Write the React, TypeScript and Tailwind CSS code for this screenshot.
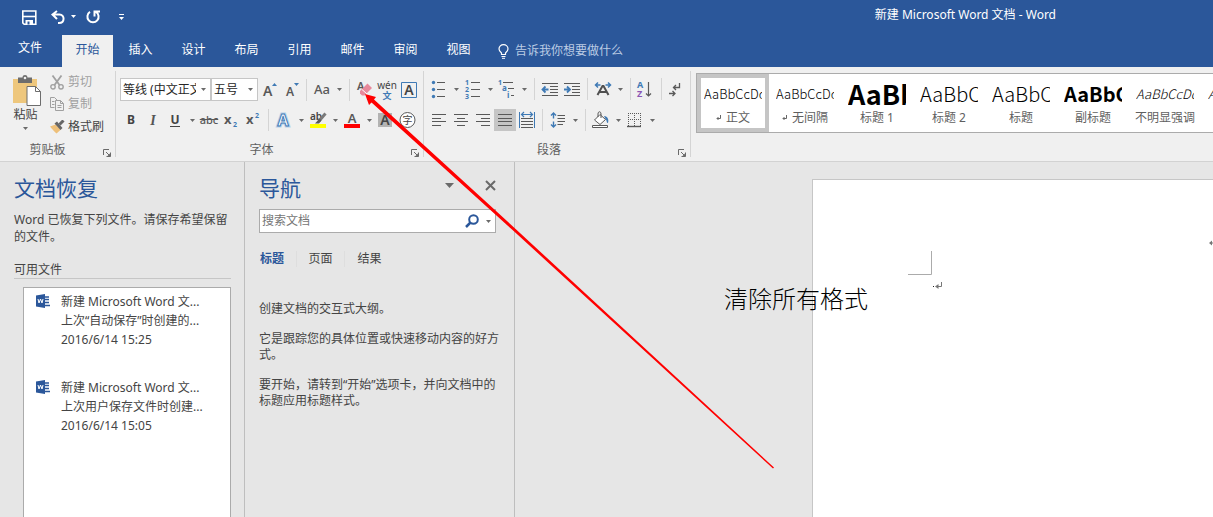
import type { ReactNode } from "react";

const INK = "#595959";
const BLUE = "#3f7ab5";

function Caret({ className = "" }: { className?: string }) {
  return (
    <svg width="5" height="3" viewBox="0 0 5 3" className={className} aria-hidden="true">
      <path d="M0 0h5L2.5 3z" fill="currentColor" />
    </svg>
  );
}

function Icon({ children }: { children: ReactNode }) {
  return (
    <svg width="22" height="22" viewBox="0 0 22 22" fill="none" className="shrink-0" aria-hidden="true">
      {children}
    </svg>
  );
}

function Tool({
  label,
  menu = false,
  pressed = false,
  children,
}: {
  label: string;
  menu?: boolean;
  pressed?: boolean;
  children: ReactNode;
}) {
  return (
    <button
      type="button"
      aria-label={label}
      aria-pressed={pressed || undefined}
      className={`flex h-[22px] shrink-0 items-center text-[#6a6a6a] ${pressed ? "bg-[#c5c5c5]" : ""}`}
    >
      <span className="flex w-[22px] justify-center">{children}</span>
      {menu && (
        <span className="flex w-3 justify-center">
          <Caret />
        </span>
      )}
    </button>
  );
}

function Sep() {
  return <span className="mx-1 h-[22px] w-px shrink-0 bg-[#d4d4d4]" />;
}

function Launcher({ label }: { label: string }) {
  return (
    <button type="button" aria-label={label} className="absolute right-1 bottom-0 text-[#6a6a6a]">
      <svg width="8" height="8" viewBox="0 0 8 8" fill="none" stroke="currentColor">
        <path d="M0.5 6V0.5H6" />
        <path d="M3 3l3.5 3.5M7.5 3.5v4h-4" />
        <path d="M7.5 4v3.5H4z" fill="currentColor" stroke="none" />
      </svg>
    </button>
  );
}

function Group({ title, className, children }: { title: string; className: string; children: ReactNode }) {
  return (
    <section aria-label={title} className={`relative flex shrink-0 flex-col ${className}`}>
      {children}
      <div className="mt-auto pr-5 text-center text-xs leading-[14px] text-[#5f5f5f]">{title}</div>
      <Launcher label={`${title}设置`} />
    </section>
  );
}

function Lines({ rows }: { rows: [number, number, number][] }) {
  return (
    <Icon>
      {rows.map(([x, y, w]) => (
        <path key={y} d={`M${x} ${y}.5h${w}`} stroke={INK} />
      ))}
    </Icon>
  );
}

const TABS = ["开始", "插入", "设计", "布局", "引用", "邮件", "审阅", "视图"];

function TitleBar() {
  return (
    <div className="flex h-[35px] items-center pl-5 text-white">
      <button type="button" aria-label="保存" className="mt-[-2px] w-[18px]">
        <svg width="18" height="18" viewBox="0 0 18 18" fill="none">
          <path d="M2.8 3h13v13.2H4.2L2.8 14.8z" stroke="#fff" strokeWidth="1.6" />
          <path d="M3 8.5h12.5" stroke="#fff" strokeWidth="1.6" />
          <path d="M5.5 12h7.5v4.5H5.5z" fill="#fff" />
          <path d="M7.5 13.5h2v3h-2z" fill="#2b579a" />
        </svg>
      </button>
      <button type="button" aria-label="撤消" className="ml-[12px] mt-[-2px] flex w-[27px] items-center">
        <svg width="16" height="16" viewBox="0 0 16 16" fill="none" stroke="#fff" strokeWidth="2">
          <path d="M7 2L2.5 5.5 7 10M3 5.5h6.5c5.5 0 5.5 8.5-.5 8.5H8" />
        </svg>
        <Caret className="ml-[5px]" />
      </button>
      <button type="button" aria-label="重复" className="ml-[8px] mt-[-2px]">
        <svg width="16" height="16" viewBox="0 0 16 16" fill="none" stroke="#fff" strokeWidth="2">
          <path d="M5 2.900A5.600 5.600 0 1 0 11 2.900M9.500 7.500V2.500H15" />
        </svg>
      </button>
      <button type="button" aria-label="自定义快速访问工具栏" className="ml-[18px] mt-[-2px] flex flex-col items-center gap-[2px]">
        <span className="h-px w-[5px] bg-white" />
        <Caret />
      </button>
      <h1 className="mt-[-5px] mr-[157px] ml-auto text-xs whitespace-nowrap">新建 Microsoft Word 文档 - Word</h1>
    </div>
  );
}

function TabBar() {
  return (
    <nav className="flex h-8 items-stretch gap-[2px] text-xs text-white">
      <button type="button" className="w-[60px] pb-[6px]">
        文件
      </button>
      {TABS.map((t, i) => (
        <button
          key={t}
          type="button"
          className={`w-[51px] shrink-0 pb-[2px] ${i === 0 ? "bg-[#f0f0f0] text-[#2b579a]" : ""}`}
        >
          {t}
        </button>
      ))}
      <button type="button" className="ml-[12px] flex items-center gap-[6px] whitespace-nowrap text-[#bccce4]">
        <svg width="11" height="15" viewBox="0 0 11 15" fill="none" stroke="#fff">
          <path d="M3.5 10.5V9C2 7.500 1 6.600 1 4.900a4.500 4.200 0 0 1 9 0C10 6.600 9 7.500 7.500 9v1.500z" strokeWidth="1.200" />
          <path d="M3.500 12.500h4M4 14.300h3" />
        </svg>
        告诉我你想要做什么
      </button>
    </nav>
  );
}

function Clipboard() {
  return (
    <Group title="剪贴板" className="w-[115px]">
      <div className="flex pl-[7px]">
        <button type="button" className="flex w-[43px] shrink-0 flex-col items-center pt-1 pr-[6px] text-xs text-[#444]">
          <svg width="28" height="32" viewBox="0 0 28 32" fill="none" className="ml-[3px]">
            <path d="M0 4h24v24H0z" fill="#eec77d" />
            <path d="M5 2.500h4.500C9.500-.8 14.500-.8 14.500 2.500H19V8H5z" fill="#6d6d6d" />
            <circle cx="12" cy="3" r="1.300" fill="#f0f0f0" />
            <path d="M14 11.500h8.500L27.500 16.500V30.500H14z" fill="#fff" stroke="#6d6d6d" />
            <path d="M22.500 11.500v5h5" stroke="#6d6d6d" />
          </svg>
          <span className="leading-4">粘贴</span>
          <Caret className="mt-1 text-[#6a6a6a]" />
        </button>
        <div className="flex flex-col text-xs text-[#444]">
          <button type="button" disabled className="flex h-[22px] items-center gap-[4px] text-[#a0a0a0]">
            <svg width="14" height="15" viewBox="0 0 14 15" fill="none" stroke="currentColor">
              <path d="M2.500 0.500L9.500 10M11.500 0.500L4.500 10" strokeWidth="1.800" />
              <circle cx="3" cy="11.800" r="2.200" strokeWidth="1.400" />
              <circle cx="11" cy="11.800" r="2.200" strokeWidth="1.400" />
            </svg>
            剪切
          </button>
          <button type="button" disabled className="flex h-[22px] items-center gap-[4px] text-[#a0a0a0]">
            <svg width="14" height="14" viewBox="0 0 14 14" fill="none" stroke="currentColor">
              <path d="M4.500 10.500h-4v-10h4l3 3M2 4.500h2.500M2 7.500h2.500" />
              <path d="M5.500 3.500h5l3 3v7h-8zM10.500 3.500v3h3M7.500 8.500h4M7.500 10.500h4" />
            </svg>
            复制
          </button>
          <button type="button" className="flex h-6 items-center gap-[3px] whitespace-nowrap">
            <svg width="15" height="14" viewBox="0 0 15 14" fill="none">
              <path d="M0 6.500L5.500 4.500 11 9.500 6.500 13.500C5 12 2 9 0 6.500z" fill="#eec07a" />
              <path d="M4.500 3.500L7 1.500 12.500 8 10.500 10z" fill="#666" />
              <path d="M9.500 4.500L13.500.5" stroke="#666" strokeWidth="3" />
            </svg>
            格式刷
          </button>
        </div>
      </div>
    </Group>
  );
}

function RibbonSelect({ label, value, className }: { label: string; value: string; className: string }) {
  return (
    <label className={`relative block h-[23px] ${className}`}>
      <select
        aria-label={label}
        className="block h-full w-full appearance-none border border-[#c6c6c6] bg-white pr-[14px] pl-[2px] text-xs text-[#262626] outline-none"
      >
        <option>{value}</option>
      </select>
      <Caret className="pointer-events-none absolute top-[10px] right-[5px] text-[#6a6a6a]" />
    </label>
  );
}

function FontGroup() {
  return (
    <Group title="字体" className="w-[308px] border-l border-[#d4d4d4] pl-1">
      <div className="flex items-center pt-[7px]">
        <RibbonSelect label="字体" value="等线 (中文正文)" className="w-[91px]" />
        <RibbonSelect label="字号" value="五号" className="w-[47px]" />
        <Tool label="增大字号">
          <Icon>
            <text x="5" y="17" fontSize="14" fontWeight="600" fill={INK}>A</text>
            <path d="M14 7h5L16.500 4z" fill={BLUE} />
          </Icon>
        </Tool>
        <Tool label="减小字号">
          <Icon>
            <text x="6" y="17" fontSize="12" fontWeight="600" fill={INK}>A</text>
            <path d="M14 4h5L16.500 7z" fill={BLUE} />
          </Icon>
        </Tool>
        <Sep />
        <Tool label="更改大小写" menu>
          <span className="text-[13px] font-medium text-[#595959]">Aa</span>
        </Tool>
        <Sep />
        <Tool label="清除所有格式">
          <Icon>
            <text x="3" y="11" fontSize="11" fontWeight="600" fill={INK}>A</text>
            <path d="M6 12L13.500 4.500 18 9 10.500 16.500H8L6 14.500z" fill="#e8899b" />
            <path d="M8 10.500l5 4.500" stroke="#fff" />
          </Icon>
        </Tool>
        <Tool label="拼音指南">
          <span className="flex flex-col items-center text-[10px] leading-[11px] text-[#444]">
            wén<span className="text-[9px] leading-[9px] font-bold text-[#3f7ab5]">文</span>
          </span>
        </Tool>
        <Tool label="字符边框">
          <Icon>
            <path d="M3.500 3.500h15v15h-15z" stroke={BLUE} />
            <text x="11" y="16" fontSize="14" fontWeight="600" textAnchor="middle" fill="#444">A</text>
          </Icon>
        </Tool>
      </div>
      <div className="flex items-center pt-[8px]">
        <Tool label="加粗"><span className="text-xs font-bold text-[#444]">B</span></Tool>
        <Tool label="倾斜"><span className="font-['Liberation_Serif',serif] text-[14px] font-bold text-[#555] italic">I</span></Tool>
        <Tool label="下划线" menu><span className="border-b border-[#444] text-xs leading-[13px] font-bold text-[#444]">U</span></Tool>
        <Tool label="删除线"><span className="text-[11px] font-medium text-[#595959] line-through">abc</span></Tool>
        <Tool label="下标">
          <Icon>
            <text x="4" y="15" fontSize="13" fontWeight="700" fill={INK}>x</text>
            <text x="13" y="18" fontSize="7" fontWeight="700" fill={BLUE}>2</text>
          </Icon>
        </Tool>
        <Tool label="上标">
          <Icon>
            <text x="4" y="15" fontSize="13" fontWeight="700" fill={INK}>x</text>
            <text x="13" y="9" fontSize="7" fontWeight="700" fill={BLUE}>2</text>
          </Icon>
        </Tool>
        <Sep />
        <Tool label="文本效果" menu>
          <Icon>
            <text x="10" y="17" fontSize="16" fontWeight="700" textAnchor="middle" fill="#fff" stroke="#b9d2ea" strokeWidth="3">A</text>
            <text x="10" y="17" fontSize="16" fontWeight="700" textAnchor="middle" fill="#fff" stroke={BLUE}>A</text>
          </Icon>
        </Tool>
        <Tool label="突出显示" menu>
          <Icon>
            <text x="3" y="11" fontSize="10" fontWeight="600" fill="#444">ab</text>
            <path d="M18.500 4.500L12 12" stroke="#7a7a7a" strokeWidth="3" />
            <path d="M12.500 9.500L8 14.500h4l2.500-3z" fill="#5a5a5a" />
            <path d="M3 15h16v4H3z" fill="#ffff00" />
          </Icon>
        </Tool>
        <Tool label="字体颜色" menu>
          <Icon>
            <text x="11" y="14" fontSize="13" fontWeight="600" textAnchor="middle" fill={INK}>A</text>
            <path d="M3 15h16v4H3z" fill="#ff0000" />
          </Icon>
        </Tool>
        <Tool label="字符底纹">
          <Icon>
            <path d="M3 4h14v14H3z" fill="#b3b3b3" />
            <text x="10" y="16" fontSize="14" fontWeight="600" textAnchor="middle" fill="#444">A</text>
          </Icon>
        </Tool>
        <Tool label="带圈字符">
          <Icon>
            <circle cx="10.500" cy="11" r="7.500" fill="#fff" stroke={INK} />
            <text x="10.500" y="15" fontSize="10" textAnchor="middle" fill="#444">字</text>
          </Icon>
        </Tool>
      </div>
    </Group>
  );
}

function ParagraphGroup() {
  return (
    <Group title="段落" className="w-[268px] border-x border-[#d4d4d4] pl-1">
      <div className="flex items-center pt-[7px]">
        <Tool label="项目符号" menu>
          <Icon>
            {[4, 11, 18].map((y) => (
              <g key={y}>
                <circle cx="5.500" cy={y + 0.5} r="1.700" fill={BLUE} />
                <path d={`M9 ${y}.5h8`} stroke={INK} />
              </g>
            ))}
          </Icon>
        </Tool>
        <Tool label="编号" menu>
          <Icon>
            {[4, 11, 18].map((y, i) => (
              <g key={y}>
                <text x="3" y={y + 3} fontSize="7" fontWeight="700" fill={BLUE}>{i + 1}</text>
                <path d={`M9 ${y}.5h9`} stroke={INK} />
              </g>
            ))}
          </Icon>
        </Tool>
        <Tool label="多级列表" menu>
          <Icon>
            <text x="2" y="7" fontSize="7" fontWeight="700" fill={BLUE}>1</text>
            <text x="6" y="13" fontSize="8" fontWeight="700" fill={BLUE}>a</text>
            <text x="11" y="20" fontSize="8" fontWeight="700" fill={BLUE}>i</text>
            <path d="M7 4.500h10M12 10.500h6M15 17.500h3" stroke={INK} />
          </Icon>
        </Tool>
        <Sep />
        <Tool label="减少缩进量">
          <Icon>
            <path d="M3 5.500h16M11 8.500h8M11 11.500h8M11 14.500h8M3 17.500h16" stroke={INK} />
            <path d="M9.500 11.500H4M6.500 8.500l-3 3 3 3" stroke={BLUE} strokeWidth="1.800" />
          </Icon>
        </Tool>
        <Tool label="增加缩进量">
          <Icon>
            <path d="M3 5.500h16M11 8.500h8M11 11.500h8M11 14.500h8M3 17.500h16" stroke={INK} />
            <path d="M3 11.500h5.500M6 8.500l3 3-3 3" stroke={BLUE} strokeWidth="1.800" />
          </Icon>
        </Tool>
        <Sep />
        <Tool label="中文版式" menu>
          <Icon>
            <path d="M5.500 17L10.500 8h1L16.500 17M7.500 14h7" stroke="#505050" strokeWidth="2" />
            <path d="M8.500 7H4M6 4.500L3.500 7 6 9.500M13.500 7H18M16 4.500L18.500 7 16 9.500" stroke={BLUE} strokeWidth="1.500" />
          </Icon>
        </Tool>
        <Sep />
        <Tool label="排序">
          <Icon>
            <text x="2" y="10" fontSize="9" fontWeight="700" fill={BLUE}>A</text>
            <text x="2" y="19" fontSize="9" fontWeight="700" fill="#8a55b5">Z</text>
            <path d="M13.500 4v14M11 15.500l2.500 2.500 2.500-2.500" stroke={INK} strokeWidth="1.200" />
          </Icon>
        </Tool>
        <Sep />
        <Tool label="显示编辑标记">
          <Icon>
            <path d="M13.500 5v4.500H8M10 7L7.500 9.500 10 12" stroke={INK} strokeWidth="1.300" />
            <path d="M3 15.500h5.500M6.500 13l2.500 2.500L6.500 18" stroke={INK} strokeWidth="1.300" />
          </Icon>
        </Tool>
      </div>
      <div className="flex items-center pt-[9px]">
        <Tool label="左对齐"><Lines rows={[[4, 5, 14], [4, 9, 9], [4, 12, 14], [4, 16, 9]]} /></Tool>
        <Tool label="居中"><Lines rows={[[4, 5, 14], [7, 9, 8], [4, 12, 14], [7, 16, 8]]} /></Tool>
        <Tool label="右对齐"><Lines rows={[[4, 5, 14], [9, 9, 9], [4, 12, 14], [9, 16, 9]]} /></Tool>
        <Tool label="两端对齐" pressed><Lines rows={[[4, 5, 14], [4, 9, 14], [4, 12, 14], [4, 16, 14]]} /></Tool>
        <Tool label="分散对齐">
          <Icon>
            <path d="M3.500 3v16M18.500 3v16" stroke={BLUE} />
            <path d="M5.500 5.500h11M8 3L5.500 5.500 8 8M14 3l2.500 2.500L14 8" stroke={BLUE} strokeWidth="1.200" />
            <path d="M5 9.500h12M5 12.500h12M5 15.500h12M5 18.500h12" stroke={INK} />
          </Icon>
        </Tool>
        <Sep />
        <Tool label="行距" menu>
          <Icon>
            <path d="M6.500 4.500v5M6.500 12.500v5M4 6.500L6.500 4 9 6.500M4 15.500L6.500 18 9 15.500" stroke={BLUE} strokeWidth="1.400" />
            <path d="M10.500 6.500H18M10.500 9.500H18M10.500 12.500H18M10.500 15.500H16" stroke={INK} />
          </Icon>
        </Tool>
        <Sep />
        <Tool label="底纹" menu>
          <Icon>
            <path d="M4.500 11L10 5.500 15.500 10.500 10 15.500z" fill="#fff" stroke={INK} />
            <path d="M8 8V5c0-3 3-3 3 0v4" stroke={INK} />
            <path d="M14 7c4 0 5 4 4 7-1.500 0-1-2.500-2.500-4z" fill={BLUE} />
            <path d="M2.500 16.500h15v2h-15z" fill="#fff" stroke={INK} />
          </Icon>
        </Tool>
        <Tool label="边框" menu>
          <Icon>
            <path d="M4 4.500h13M4 10.500h13M4.500 4v13M10.500 4v13M16.500 4v13" stroke={INK} strokeDasharray="1 1" />
            <path d="M3 17.500h14" stroke={INK} strokeWidth="1.400" />
          </Icon>
        </Tool>
      </div>
    </Group>
  );
}

const STYLES = [
  { name: "正文", mark: true, sample: "text-[13px] font-light" },
  { name: "无间隔", mark: true, sample: "text-[13px] font-light" },
  { name: "标题 1", mark: false, sample: "text-[27px] font-bold" },
  { name: "标题 2", mark: false, sample: "text-[20px] font-light" },
  { name: "标题", mark: false, sample: "text-[20px] font-light" },
  { name: "副标题", mark: false, sample: "text-[20px] font-bold" },
  { name: "不明显强调", mark: false, sample: "text-[13px] font-light italic" },
  { name: "强调", mark: false, sample: "text-[13px] font-light italic" },
];

function StyleGallery() {
  return (
    <div className="ml-[5px] mt-[6px] flex h-[60px] min-w-0 flex-1 overflow-hidden border-y border-l border-[#ababab] bg-white">
      {STYLES.map((s, i) => (
        <button
          key={s.name}
          type="button"
          className={`flex w-[72px] shrink-0 flex-col items-center border-4 ${i === 0 ? "border-[#c5c5c5]" : "border-transparent"}`}
        >
          <span className={`flex h-[32px] w-[58px] items-center overflow-hidden font-['Noto_Sans_CJK_SC',sans-serif] whitespace-nowrap text-black ${s.sample}`}>
            AaBbCcDd
          </span>
          <span className="flex items-center gap-[5px] text-xs leading-[16px] whitespace-nowrap text-[#5f5f5f]">
            {s.mark && (
              <svg width="5" height="6" viewBox="0 0 5 6" fill="none" stroke="#666" aria-hidden="true">
                <path d="M4.500 0v3.500H1M2.500 2L1 3.500 2.500 5" />
              </svg>
            )}
            {s.name}
          </span>
        </button>
      ))}
    </div>
  );
}

function WordIcon() {
  return (
    <svg width="15" height="14" viewBox="0 0 15 14" fill="none" className="mt-[2px] shrink-0" aria-hidden="true">
      <path d="M8 2h5.500v10H8z" fill="#fff" />
      <path d="M8 3h5M8 5.500h5M8 8.500h5M8 11.500h6" stroke="#2b579a" strokeWidth="1.500" />
      <path d="M0 1.500L9 0v14L0 12.500z" fill="#2b579a" />
      <path d="M2 5l1 4 1.500-4L6 9l1-4" stroke="#fff" />
    </svg>
  );
}

const FILES = [
  ["新建 Microsoft Word 文...", "上次“自动保存”时创建的...", "2016/6/14 15:25"],
  ["新建 Microsoft Word 文...", "上次用户保存文件时创建...", "2016/6/14 15:05"],
];

function RecoveryPane() {
  return (
    <aside className="flex w-[245px] shrink-0 flex-col border-r border-[#bebebe] pr-[13px] pl-[14px]">
      <h2 className="pt-[11px] text-[21px] leading-[30px] text-[#2b579a]">文档恢复</h2>
      <p className="pt-2 text-xs leading-[17px]">Word 已恢复下列文件。请保存希望保留的文件。</p>
      <h3 className="mt-4 border-b border-[#c6c6c6] text-xs leading-[17px]">可用文件</h3>
      <ul className="mt-2 ml-[9px] flex-1 border-x border-t border-[#ababab] bg-white pl-3 text-xs leading-[19px]">
        {FILES.map((f) => (
          <li key={f[2]} className="flex gap-[10px] pt-[4px] pb-[25px]">
            <WordIcon />
            <div className="whitespace-nowrap">
              {f.map((line) => (
                <div key={line}>{line}</div>
              ))}
            </div>
          </li>
        ))}
      </ul>
    </aside>
  );
}

function NavigationPane() {
  return (
    <aside className="flex w-[270px] shrink-0 flex-col border-r border-[#bebebe] pl-[14px] text-xs">
      <div className="flex items-center pt-[11px] pr-[18px]">
        <h2 className="text-[21px] leading-[30px] text-[#2b579a]">导航</h2>
        <button type="button" aria-label="窗格选项" className="mb-[6px] ml-auto text-[#6a6a6a]">
          <svg width="9" height="5" viewBox="0 0 9 5"><path d="M0 0h9L4.500 5z" fill="currentColor" /></svg>
        </button>
        <button type="button" aria-label="关闭" className="mb-[6px] ml-[31px] text-[#6a6a6a]">
          <svg width="11" height="11" viewBox="0 0 11 11" stroke="currentColor" strokeWidth="2"><path d="M1 1l9 9M10 1l-9 9" /></svg>
        </button>
      </div>
      <div className="mt-[6px] mr-[18px] flex h-[24px] items-center border border-[#ababab] bg-white">
        <input
          type="text"
          aria-label="搜索文档"
          placeholder="搜索文档"
          className="min-w-0 flex-1 pl-[2px] outline-none placeholder:text-[#767676]"
        />
        <button type="button" aria-label="搜索" className="text-[#2b579a]">
          <svg width="14" height="14" viewBox="0 0 14 14" fill="none" stroke="currentColor" strokeWidth="2">
            <circle cx="8.500" cy="5.500" r="4.300" />
            <path d="M5.500 8.500L1 13" strokeWidth="2.500" />
          </svg>
        </button>
        <button type="button" aria-label="搜索选项" className="mr-1 ml-[7px] text-[#6a6a6a]">
          <Caret />
        </button>
      </div>
      <div className="mt-4 flex h-5 items-center">
        <button type="button" className="w-[37px] pl-px text-left font-bold text-[#2b579a]">标题</button>
        <button type="button" className="w-[49px] border-x border-[#dedede]">页面</button>
        <button type="button" className="w-[49px]">结果</button>
      </div>
      <div className="mt-8 flex flex-col gap-[14px] pr-[14px] leading-[16px]">
        <p>创建文档的交互式大纲。</p>
        <p>它是跟踪您的具体位置或快速移动内容的好方式。</p>
        <p>要开始，请转到“开始”选项卡，并向文档中的标题应用标题样式。</p>
      </div>
    </aside>
  );
}

function DocumentArea() {
  return (
    <main className="relative flex min-w-0 flex-1 pt-[17px] pl-[297px]">
      <div className="relative flex-1 overflow-hidden border-t border-l border-[#c6c6c6] bg-white">
        <svg width="40" height="42" viewBox="0 0 40 42" fill="none" className="absolute top-[71px] left-[95px]" aria-hidden="true">
          <path d="M23.500 0v23.500H0" stroke="#ababab" />
          <path d="M33.500 31v4.500H28" stroke="#777" />
          <path d="M30.500 33v5L27 35.500z" fill="#777" />
          <path d="M25 35h1v1h-1z" fill="#222" />
        </svg>
        <svg width="4" height="6" viewBox="0 0 4 6" className="absolute top-[60px] right-0" aria-hidden="true">
          <path d="M0 3l3-2.500v5zM2 2.500h2v1H2z" fill="#777" />
        </svg>
      </div>
      <p className="absolute top-[118px] left-[209px] font-['Noto_Sans_CJK_SC',sans-serif] text-2xl leading-9 font-light whitespace-nowrap text-black">
        清除所有格式
      </p>
    </main>
  );
}

export default function App() {
  return (
    <div className="relative flex min-h-screen flex-col overflow-hidden bg-[#e6e6e6] font-['Noto_Sans','Noto_Sans_CJK_SC',sans-serif] text-[#444]">
      <header className="bg-[#2b579a]">
        <TitleBar />
        <TabBar />
      </header>
      <div className="flex h-[95px] border-b border-[#d2d2d2] bg-[#f0f0f0]">
        <div className="flex shrink-0 pt-1 pb-1">
          <Clipboard />
          <FontGroup />
          <ParagraphGroup />
        </div>
        <StyleGallery />
      </div>
      <div className="flex flex-1">
        <RecoveryPane />
        <NavigationPane />
        <DocumentArea />
      </div>
      <svg width="410" height="376" viewBox="0 0 410 376" className="pointer-events-none absolute top-[93px] left-[365px]" aria-hidden="true">
        <path d="M0 1L11 4 9 6.500 149 134.500 409 374.500 408 375.500 147 136.500 6.500 9.500 4 12z" fill="#ff0000" />
      </svg>
    </div>
  );
}
